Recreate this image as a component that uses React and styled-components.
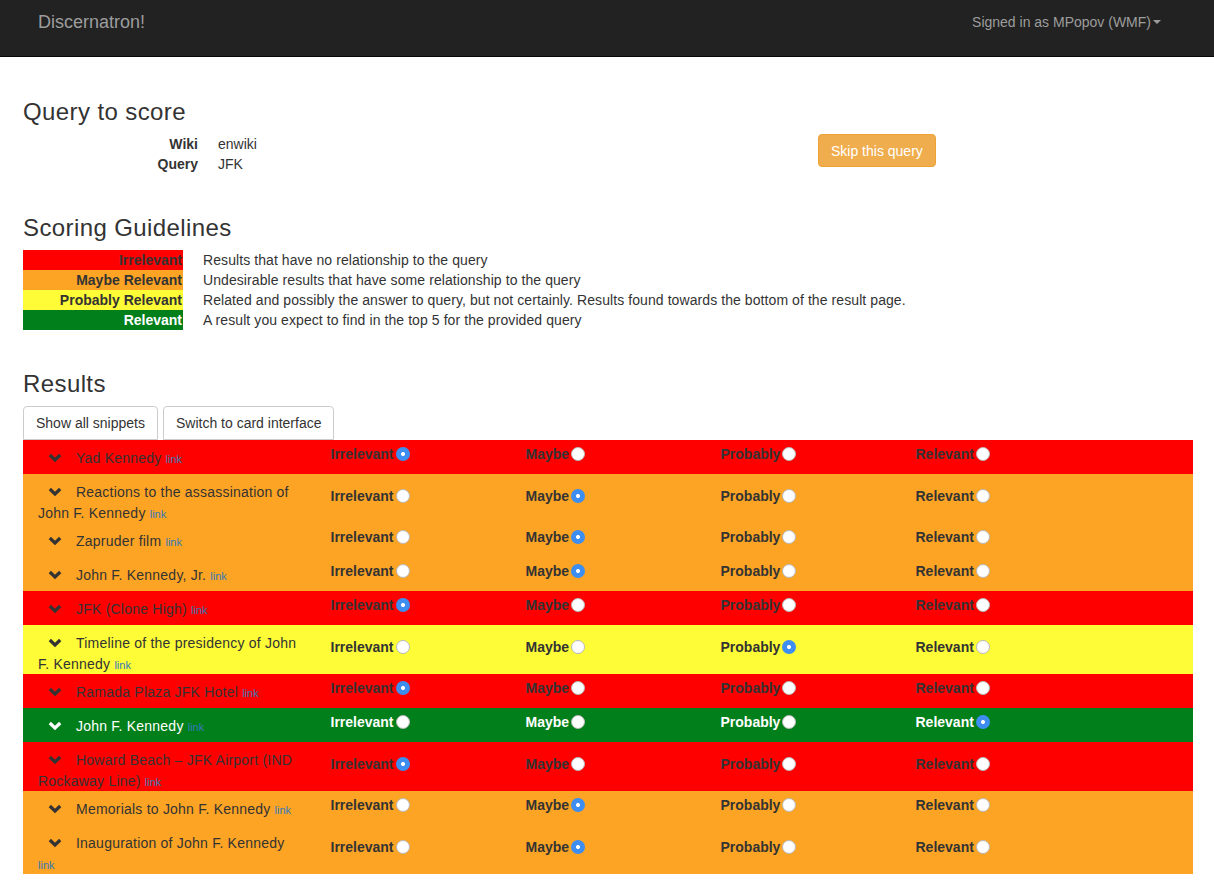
import styled, { createGlobalStyle } from "styled-components";

const GlobalStyle = createGlobalStyle`
  body {
    margin: 0;
    font-family: "Liberation Sans", Arial, sans-serif;
    font-size: 14px;
    line-height: 20px;
    color: #333;
    background: #fff;
  }
`;

const ROW_COLORS = {
  red: { bg: "#ff0000", fg: "#333" },
  orange: { bg: "#fea424", fg: "#333" },
  yellow: { bg: "#fdfc36", fg: "#333" },
  green: { bg: "#017f1b", fg: "#fff" },
};

const Navbar = styled.div`
  height: 56px;
  background: #222;
  border-bottom: 1px solid #080808;
  display: flex;
  align-items: flex-start;
  justify-content: space-between;
  padding: 0 53px 0 38px;
`;

const Brand = styled.span`
  font-size: 18px;
  line-height: 20px;
  padding-top: 12px;
  color: #9d9d9d;
`;

const UserMenu = styled.span`
  padding-top: 12px;
  color: #9d9d9d;
  display: flex;
  align-items: center;
  gap: 2px;
`;

const Caret = styled.span`
  display: inline-block;
  width: 0;
  height: 0;
  border-top: 4px solid #9d9d9d;
  border-left: 4px solid transparent;
  border-right: 4px solid transparent;
`;

const Container = styled.div`
  width: 1170px;
  padding-top: 20px;
  margin-left: 23px;
`;

const Heading = styled.h3`
  font-size: 24px;
  font-weight: 500;
  line-height: 26px;
  letter-spacing: 0.4px;
  margin: 22px 0 9px;
  color: #333;
`;

const QueryRow = styled.div`
  display: grid;
  grid-template-columns: 780px 390px;
  margin-bottom: 41px;
`;

const DefList = styled.dl`
  display: grid;
  grid-template-columns: 160px 1fr;
  column-gap: 20px;
  margin: 0 0 0 15px;
`;

const Term = styled.dt`
  font-weight: bold;
  text-align: right;
`;

const Def = styled.dd`
  margin: 0;
`;

const SkipButton = styled.button`
  justify-self: start;
  align-self: start;
  margin: 0 0 0 15px;
  font: inherit;
  color: #fff;
  background: #f0ad4e;
  border: 1px solid #eea236;
  border-radius: 4px;
  padding: 6px 12px 5px;
  line-height: 20px;
`;

const Legend = styled.div`
  display: grid;
  grid-template-columns: 160px 1fr;
  column-gap: 20px;
  margin-bottom: 41px;
`;

const LegendSwatch = styled.div`
  background: ${({ $tone }) => ROW_COLORS[$tone].bg};
  color: ${({ $tone }) => ROW_COLORS[$tone].fg};
  font-weight: bold;
  text-align: right;
  padding-right: 1px;
`;

const LegendText = styled.div`
  letter-spacing: 0.08px;
`;

const Toolbar = styled.div`
  display: flex;
  gap: 5px;
`;

const PlainButton = styled.button`
  font: inherit;
  color: #333;
  background: #fff;
  border: 1px solid #ccc;
  border-radius: 4px 4px 0 0;
  padding: 6px 12px;
  line-height: 20px;
`;

const ResultRow = styled.div`
  display: grid;
  grid-template-columns: 292.5px repeat(4, 195px) 1fr;
  min-height: 34px;
  background: ${({ $tone }) => ROW_COLORS[$tone].bg};
  color: ${({ $tone }) => ROW_COLORS[$tone].fg};
`;

const TitleCell = styled.div`
  padding: 8px 15px 0;
  line-height: 20.5px;
  letter-spacing: 0.22px;
`;

const Chevron = styled.svg`
  width: 14px;
  height: 10px;
  margin: 0 14px 0 10px;
  vertical-align: 0;
`;

const SmallLink = styled.a`
  font-size: 11px;
  line-height: 10px;
  letter-spacing: 0;
  color: #337ab7;
  text-decoration: none;
`;

const ScoreCell = styled.div`
  align-self: center;
  padding: 0 15px 4px;
  margin-top: -2px;
`;

const ScoreLabel = styled.label`
  display: inline-flex;
  align-items: center;
  gap: 2px;
  font-weight: bold;
  line-height: 20px;
`;

const Radio = styled.input`
  appearance: none;
  margin: 0;
  width: 14px;
  height: 14px;
  border-radius: 50%;
  background: #fff;
  border: 1px solid #b8b8b8;
  box-sizing: border-box;

  &:checked {
    border: none;
    background: radial-gradient(circle, #fff 0 1.7px, #3d8ef0 2.3px);
  }
`;

const legend = [
  ["red", "Irrelevant", "Results that have no relationship to the query"],
  ["orange", "Maybe Relevant", "Undesirable results that have some relationship to the query"],
  ["yellow", "Probably Relevant", "Related and possibly the answer to query, but not certainly. Results found towards the bottom of the result page."],
  ["green", "Relevant", "A result you expect to find in the top 5 for the provided query"],
];

const scores = ["Irrelevant", "Maybe", "Probably", "Relevant"];
const toneFor = ["red", "orange", "yellow", "green"];

const results = [
  ["Yad Kennedy", 0],
  ["Reactions to the assassination of John F. Kennedy", 1],
  ["Zapruder film", 1],
  ["John F. Kennedy, Jr.", 1],
  ["JFK (Clone High)", 0],
  ["Timeline of the presidency of John F. Kennedy", 2],
  ["Ramada Plaza JFK Hotel", 0],
  ["John F. Kennedy", 3],
  ["Howard Beach – JFK Airport (IND Rockaway Line)", 0],
  ["Memorials to John F. Kennedy", 1],
  ["Inauguration of John F. Kennedy", 1],
];

function ChevronDown({ color }) {
  return (
    <Chevron viewBox="0 0 14 10">
      <polyline points="1.8,2 7,7 12.2,2" fill="none" stroke={color} strokeWidth="3.2" />
    </Chevron>
  );
}

export default function App() {
  return (
    <>
      <GlobalStyle />
      <Navbar>
        <Brand>Discernatron!</Brand>
        <UserMenu>
          Signed in as MPopov (WMF) <Caret />
        </UserMenu>
      </Navbar>
      <Container>
        <Heading>Query to score</Heading>
        <QueryRow>
          <DefList>
            <Term>Wiki</Term>
            <Def>enwiki</Def>
            <Term>Query</Term>
            <Def>JFK</Def>
          </DefList>
          <SkipButton>Skip this query</SkipButton>
        </QueryRow>

        <Heading>Scoring Guidelines</Heading>
        <Legend>
          {legend.map(([tone, name, text]) => [
            <LegendSwatch key={name} $tone={tone}>{name}</LegendSwatch>,
            <LegendText key={name + "-text"}>{text}</LegendText>,
          ])}
        </Legend>

        <Heading>Results</Heading>
        <Toolbar>
          <PlainButton>Show all snippets</PlainButton>
          <PlainButton>Switch to card interface</PlainButton>
        </Toolbar>
        {results.map(([title, picked], i) => {
          const tone = toneFor[picked];
          return (
            <ResultRow key={i} $tone={tone}>
              <TitleCell>
                <ChevronDown color={ROW_COLORS[tone].fg} />
                {title} <SmallLink href="#">link</SmallLink>
              </TitleCell>
              {scores.map((s, j) => (
                <ScoreCell key={s}>
                  <ScoreLabel>
                    {s}
                    <Radio type="radio" name={"r" + i} checked={j === picked} readOnly />
                  </ScoreLabel>
                </ScoreCell>
              ))}
              <div />
            </ResultRow>
          );
        })}
      </Container>
    </>
  );
}
